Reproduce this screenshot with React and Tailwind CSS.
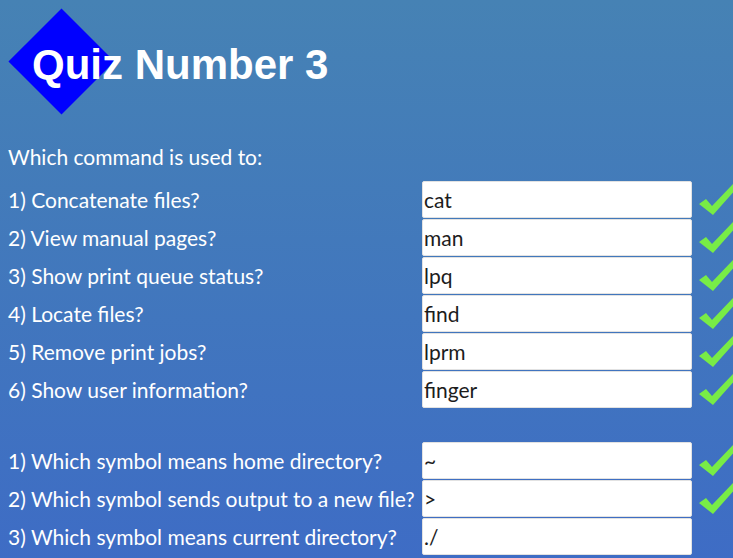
import React from 'react'

const commands = [
  { q: '1) Concatenate files?', a: 'cat', ok: true },
  { q: '2) View manual pages?', a: 'man', ok: true },
  { q: '3) Show print queue status?', a: 'lpq', ok: true },
  { q: '4) Locate files?', a: 'find', ok: true },
  { q: '5) Remove print jobs?', a: 'lprm', ok: true },
  { q: '6) Show user information?', a: 'finger', ok: true },
]

const symbols = [
  { q: '1) Which symbol means home directory?', a: '~', ok: true },
  { q: '2) Which symbol sends output to a new file?', a: '>', ok: true },
  { q: '3) Which symbol means current directory?', a: './', ok: false },
]

function Check() {
  return (
    <svg width="40" height="34" viewBox="0 0 40 34" className="shrink-0">
      <path d="M1 21 L8 16 L14 23 L35 1 L40 4 L15 32 Z" fill="#78ec46" />
    </svg>
  )
}

function Row({ q, a, ok }) {
  return (
    <div className="flex items-center h-[37px]">
      <div className="w-[414px] shrink-0">{q}</div>
      <div className="w-[270px] h-[37px] shrink-0 bg-white border border-[#e2e2e2] rounded-[2px] text-[#1c1c1c] pl-px flex items-center">
        {a}
      </div>
      <div className="w-[41px] pl-[6px] flex items-center">{ok && <Check />}</div>
    </div>
  )
}

export default function App() {
  return (
    <div className="min-h-[558px] w-[733px] overflow-hidden bg-gradient-to-b from-[#4682b4] to-[#3e6cc5] px-2 pb-2 font-['Lato',sans-serif] text-[21px] text-white">
      <div className="relative h-[128px]">
        <div className="absolute left-[16px] top-[24px] w-[75px] h-[75px] bg-[#0000ff] rotate-45"></div>
        <h1 className="relative pt-[41px] pl-[24px] font-['Liberation_Sans',Arial,sans-serif] font-bold text-[42px] leading-[48px]">
          Quiz Number 3
        </h1>
      </div>
      <div className="h-[53px] pt-[16px] leading-[25px]">Which command is used to:</div>
      <div className="flex flex-col gap-px">
        {commands.map((r) => (
          <Row key={r.q} {...r} />
        ))}
      </div>
      <div className="h-[34px]"></div>
      <div className="flex flex-col gap-px">
        {symbols.map((r) => (
          <Row key={r.q} {...r} />
        ))}
      </div>
    </div>
  )
}
